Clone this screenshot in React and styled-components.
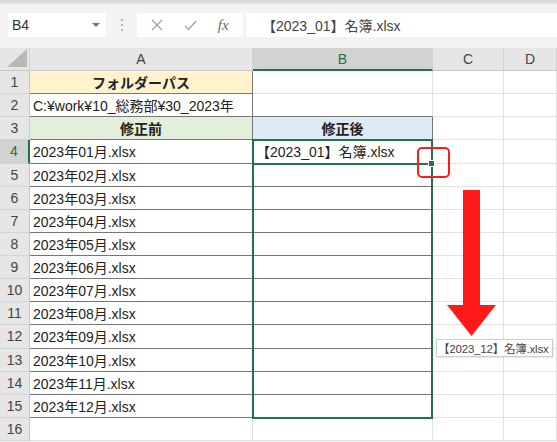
import styled, { createGlobalStyle } from "styled-components";

const GlobalStyle = createGlobalStyle`
  body {
    margin: 0;
    background: #ffffff;
    font-family: "Liberation Sans", "Noto Sans CJK JP", sans-serif;
  }
`;

const COLS = ["A", "B", "C", "D"];
const ROWS = 16;

const cellData = {
  "1A": { text: "フォルダーパス", bold: true, center: true, fill: "#fff2cc" },
  "2A": { text: "C:¥work¥10_総務部¥30_2023年" },
  "3A": { text: "修正前", bold: true, center: true, fill: "#e2efda" },
  "3B": { text: "修正後", bold: true, center: true, fill: "#ddebf7" },
  "4B": { text: "【2023_01】名簿.xlsx" },
};
for (let m = 1; m <= 12; m++) {
  cellData[`${m + 3}A`] = { text: `2023年${String(m).padStart(2, "0")}月.xlsx` };
}

// cells with the thin table border
const bordered = (r, c) =>
  (c === "A" && r >= 1 && r <= 15) || (c === "B" && r >= 3 && r <= 15);

const Page = styled.div`
  position: relative;
  width: 557px;
  height: 442px;
  overflow: hidden;
  background: #f3f3f3;
`;

const TopStrip = styled.div`
  height: 4px;
  background: linear-gradient(#d4d4d4, #e6e6e6);
`;

const FormulaBar = styled.div`
  display: flex;
  align-items: center;
  height: 44px;
  padding: 9px 0 11px 8px;
  box-sizing: border-box;
`;

const NameBox = styled.div`
  display: flex;
  align-items: center;
  justify-content: space-between;
  width: 98px;
  height: 24px;
  padding: 0 6px 0 4px;
  box-sizing: border-box;
  background: #fff;
  color: #333;
  font-size: 14px;
`;

const Caret = styled.span`
  width: 0;
  height: 0;
  border-left: 4px solid transparent;
  border-right: 4px solid transparent;
  border-top: 4px solid #777;
`;

const Dots = styled.div`
  width: 31px;
  display: flex;
  flex-direction: column;
  align-items: center;
  gap: 3px;
  span {
    width: 2px;
    height: 2px;
    background: #b5b5b5;
  }
`;

const Buttons = styled.div`
  display: flex;
  align-items: center;
  justify-content: space-around;
  width: 106px;
  height: 24px;
  background: #fff;
  padding: 0 4px;
  box-sizing: border-box;
`;

const Fx = styled.span`
  font-family: "Liberation Serif", serif;
  font-style: italic;
  font-size: 15px;
  color: #6a6a6a;
`;

const FormulaInput = styled.div`
  flex: 1;
  height: 24px;
  margin-left: 3px;
  background: #fff;
  display: flex;
  align-items: center;
  padding-left: 16px;
  font-size: 14px;
  color: #444;
`;

const Sheet = styled.div`
  display: grid;
  grid-template-columns: 30px 223px 180px 71px 1fr;
  grid-template-rows: 23px repeat(${ROWS}, 23.13px);
  background: #fff;
`;

const Corner = styled.div`
  grid-row: 1;
  grid-column: 1;
  background: #e6e6e6;
  border-right: 1px solid #d0d0d0;
  border-bottom: 1px solid #c8c8c8;
  position: relative;
  &::after {
    content: "";
    position: absolute;
    right: 2px;
    bottom: 3px;
    border-left: 20px solid transparent;
    border-bottom: 18px solid #b8b8b8;
  }
`;

const ColHeader = styled.div`
  grid-row: 1;
  grid-column: ${(p) => p.$col};
  display: flex;
  align-items: center;
  justify-content: center;
  font-size: 14px;
  color: ${(p) => (p.$active ? "#217346" : "#444")};
  background: ${(p) => (p.$active ? "#d2d2d2" : "#e6e6e6")};
  border-right: 1px solid #d2d2d2;
  border-bottom: ${(p) => (p.$active ? "2px solid #217346" : "1px solid #c8c8c8")};
  box-sizing: border-box;
`;

const RowHeader = styled.div`
  grid-row: ${(p) => p.$row};
  grid-column: 1;
  display: flex;
  align-items: center;
  justify-content: center;
  font-size: 14px;
  color: ${(p) => (p.$active ? "#217346" : "#444")};
  background: ${(p) => (p.$active ? "#d2d2d2" : "#e6e6e6")};
  border-bottom: 1px solid #d4d4d4;
  border-right: ${(p) => (p.$active ? "2px solid #217346" : "1px solid #c8c8c8")};
  box-sizing: border-box;
`;

const Cell = styled.div`
  grid-row: ${(p) => p.$row};
  grid-column: ${(p) => p.$col};
  display: flex;
  align-items: center;
  justify-content: ${(p) => (p.$center ? "center" : "flex-start")};
  padding: 0 3px;
  box-sizing: border-box;
  min-width: 0;
  white-space: nowrap;
  font-size: 14px;
  font-weight: ${(p) => (p.$bold ? 700 : 400)};
  color: #222;
  background: ${(p) => p.$fill || "#fff"};
  border-right: 1px solid ${(p) => (p.$darkRight ? "#767676" : "#e1e1e1")};
  border-bottom: 1px solid ${(p) => (p.$darkBottom ? "#767676" : "#e1e1e1")};
`;

const Selection = styled.div`
  grid-column: 3;
  grid-row: ${(p) => p.$rows};
  margin: -1px 0 -1px -1px;
  border: 2px solid #217346;
  pointer-events: none;
  position: relative;
  z-index: 2;
`;

const FillHandle = styled.span`
  position: absolute;
  right: -4px;
  bottom: -4px;
  width: 5px;
  height: 5px;
  background: #217346;
  border: 1px solid #fff;
`;

const Highlight = styled.div`
  position: absolute;
  left: 417px;
  top: 147px;
  width: 33px;
  height: 31px;
  box-sizing: border-box;
  border: 2px solid #ff1a1a;
  border-radius: 5px;
  z-index: 3;
`;

const Arrow = styled.svg`
  position: absolute;
  left: 447px;
  top: 190px;
  z-index: 3;
`;

const Tip = styled.div`
  position: absolute;
  left: 436px;
  top: 339px;
  width: 117px;
  height: 18px;
  box-sizing: border-box;
  padding: 0 1px;
  display: flex;
  align-items: center;
  background: #fff;
  border: 1px solid #cfcfcf;
  box-shadow: 1px 1px 1px rgba(0, 0, 0, 0.08);
  font-size: 11.5px;
  letter-spacing: -0.2px;
  color: #444;
  white-space: nowrap;
  overflow: hidden;
  z-index: 3;
`;

function XIcon() {
  return (
    <svg width="12" height="12" viewBox="0 0 12 12">
      <path d="M1 1 L11 11 M11 1 L1 11" stroke="#a0a0a0" strokeWidth="1.2" />
    </svg>
  );
}

function CheckIcon() {
  return (
    <svg width="13" height="11" viewBox="0 0 13 11">
      <path d="M1 6 L4.5 9.5 L12 1" stroke="#a0a0a0" strokeWidth="1.2" fill="none" />
    </svg>
  );
}

export default function App() {
  const cells = [];
  for (let r = 1; r <= ROWS; r++) {
    cells.push(
      <RowHeader key={`h${r}`} $row={r + 1} $active={r === 4}>
        {r}
      </RowHeader>
    );
    COLS.forEach((c, i) => {
      const d = cellData[`${r}${c}`] || {};
      const next = COLS[i + 1];
      cells.push(
        <Cell
          key={`${r}${c}`}
          $row={r + 1}
          $col={i + 2}
          $center={d.center}
          $bold={d.bold}
          $fill={d.fill}
          $darkRight={bordered(r, c) || (next && bordered(r, next))}
          $darkBottom={bordered(r, c) || bordered(r + 1, c)}
        >
          {d.text}
        </Cell>
      );
    });
  }

  return (
    <>
      <GlobalStyle />
      <Page>
        <TopStrip />
        <FormulaBar>
          <NameBox>
            B4
            <Caret />
          </NameBox>
          <Dots>
            <span />
            <span />
            <span />
          </Dots>
          <Buttons>
            <XIcon />
            <CheckIcon />
            <Fx>fx</Fx>
          </Buttons>
          <FormulaInput>【2023_01】名簿.xlsx</FormulaInput>
        </FormulaBar>
        <Sheet>
          <Corner />
          {COLS.map((c, i) => (
            <ColHeader key={c} $col={i + 2} $active={c === "B"}>
              {c}
            </ColHeader>
          ))}
          {cells}
          <Selection $rows="5 / 17" />
          <Selection $rows="5 / 6">
            <FillHandle />
          </Selection>
        </Sheet>
        <Highlight />
        <Arrow width="50" height="147" viewBox="0 0 50 147">
          <rect x="16" y="0" width="17" height="116" fill="#ff1a1a" />
          <polygon points="0,115 49,115 24.5,146" fill="#ff1a1a" />
        </Arrow>
        <Tip>【2023_12】名簿.xlsx</Tip>
      </Page>
    </>
  );
}
